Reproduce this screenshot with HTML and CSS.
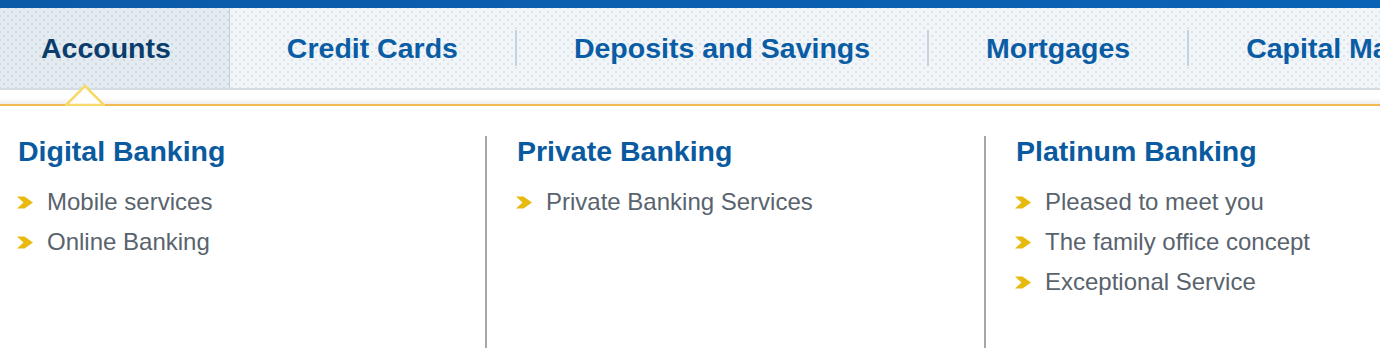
FILE: index.html
```html
<!DOCTYPE html>
<html lang="en">
<head>
<meta charset="utf-8">
<title>Menu</title>
<link rel="stylesheet" href="styles.css">
</head>
<body>
<div class="topbar"></div>
<nav class="nav">
  <a class="tab tab-active">Accounts</a>
  <a class="tab tab-first">Credit Cards</a>
  <span class="sep"></span>
  <a class="tab">Deposits and Savings</a>
  <span class="sep"></span>
  <a class="tab">Mortgages</a>
  <span class="sep"></span>
  <a class="tab">Capital Markets</a>
</nav>
<div class="strip">
  <svg class="pointer" width="40" height="22" viewBox="0 0 40 22">
    <polygon points="1,21 20,2 39,21" fill="#ffffff" stroke="#f7d868" stroke-width="2.5"/>
  </svg>
</div>
<div class="rule"></div>
<section class="dropdown">
  <div class="col col-first">
    <h2 class="col-title">Digital Banking</h2>
    <ul class="links">
      <li class="link"><svg class="chev" width="16" height="13" viewBox="0 0 16 13"><polygon points="0,0.5 7.5,0.5 16,6.5 7.5,12.5 0,12.5 6.5,6.5" fill="#e8b90f"/></svg>Mobile services</li>
      <li class="link"><svg class="chev" width="16" height="13" viewBox="0 0 16 13"><polygon points="0,0.5 7.5,0.5 16,6.5 7.5,12.5 0,12.5 6.5,6.5" fill="#e8b90f"/></svg>Online Banking</li>
    </ul>
  </div>
  <div class="col">
    <h2 class="col-title">Private Banking</h2>
    <ul class="links">
      <li class="link"><svg class="chev" width="16" height="13" viewBox="0 0 16 13"><polygon points="0,0.5 7.5,0.5 16,6.5 7.5,12.5 0,12.5 6.5,6.5" fill="#e8b90f"/></svg>Private Banking Services</li>
    </ul>
  </div>
  <div class="col">
    <h2 class="col-title">Platinum Banking</h2>
    <ul class="links">
      <li class="link"><svg class="chev" width="16" height="13" viewBox="0 0 16 13"><polygon points="0,0.5 7.5,0.5 16,6.5 7.5,12.5 0,12.5 6.5,6.5" fill="#e8b90f"/></svg>Pleased to meet you</li>
      <li class="link"><svg class="chev" width="16" height="13" viewBox="0 0 16 13"><polygon points="0,0.5 7.5,0.5 16,6.5 7.5,12.5 0,12.5 6.5,6.5" fill="#e8b90f"/></svg>The family office concept</li>
      <li class="link"><svg class="chev" width="16" height="13" viewBox="0 0 16 13"><polygon points="0,0.5 7.5,0.5 16,6.5 7.5,12.5 0,12.5 6.5,6.5" fill="#e8b90f"/></svg>Exceptional Service</li>
    </ul>
  </div>
</section>
</body>
</html>
```

FILE: styles.css
```css
html, body {
  margin: 0;
  padding: 0;
  background: #ffffff;
  width: 1380px;
  height: 348px;
  overflow: hidden;
  font-family: "Liberation Sans", Arial, Helvetica, sans-serif;
}

.topbar {
  height: 8px;
  background: linear-gradient(90deg, #0a5aa8 0%, #0c5eae 40%, #0a62b6 100%);
}

.nav {
  display: flex;
  align-items: center;
  height: 80px;
  white-space: nowrap;
  overflow: hidden;
  background-color: #f1f5f8;
  background-image:
    radial-gradient(circle, rgba(200, 214, 224, 0.55) 1px, transparent 1.6px),
    radial-gradient(circle, rgba(200, 214, 224, 0.55) 1px, transparent 1.6px);
  background-size: 8px 8px;
  background-position: 0 0, 4px 4px;
  border-bottom: 2px solid #d3dce2;
}

.tab {
  display: flex;
  align-items: center;
  height: 100%;
  padding: 0 57px;
  font-size: 28.5px;
  font-weight: bold;
  color: #0a5ca4;
  text-decoration: none;
  box-sizing: border-box;
}

.tab-active {
  padding: 0 58px 0 41px;
  color: #0b3d6c;
  background-color: #e3ebf1;
  background-image:
    radial-gradient(circle, rgba(190, 206, 218, 0.6) 1px, transparent 1.6px),
    radial-gradient(circle, rgba(190, 206, 218, 0.6) 1px, transparent 1.6px);
  background-size: 8px 8px;
  background-position: 0 0, 4px 4px;
  border-right: 1px solid #c6d1d9;
}

.sep {
  flex: none;
  width: 2px;
  height: 36px;
  background: #c4d2e0;
}

.strip {
  position: relative;
  height: 14px;
  background: linear-gradient(#ffffff 0%, #ffffff 55%, #eeeeee 100%);
}

.pointer {
  position: absolute;
  left: 65px;
  top: -6px;
}

.rule {
  height: 2px;
  background: #f1ba52;
}

.dropdown {
  display: flex;
  padding: 30px 0 0 17px;
  overflow: hidden;
  height: 212px;
}

.col {
  width: 468px;
  flex: none;
  padding-left: 29px;
  border-left: 2px solid #a7a7a7;
}

.col-first {
  width: 468px;
  padding-left: 0;
  border-left: none;
}

.col-title {
  margin: -1px 0 15px 1px;
  font-size: 28.5px;
  line-height: 32px;
  font-weight: bold;
  color: #0a5aa0;
}

.links {
  list-style: none;
  margin: 0;
  padding: 0;
}

.link {
  display: flex;
  align-items: center;
  height: 40px;
  font-size: 24px;
  color: #59636d;
}

.chev {
  flex: none;
  margin-right: 14px;
  margin-top: 1px;
}
```
